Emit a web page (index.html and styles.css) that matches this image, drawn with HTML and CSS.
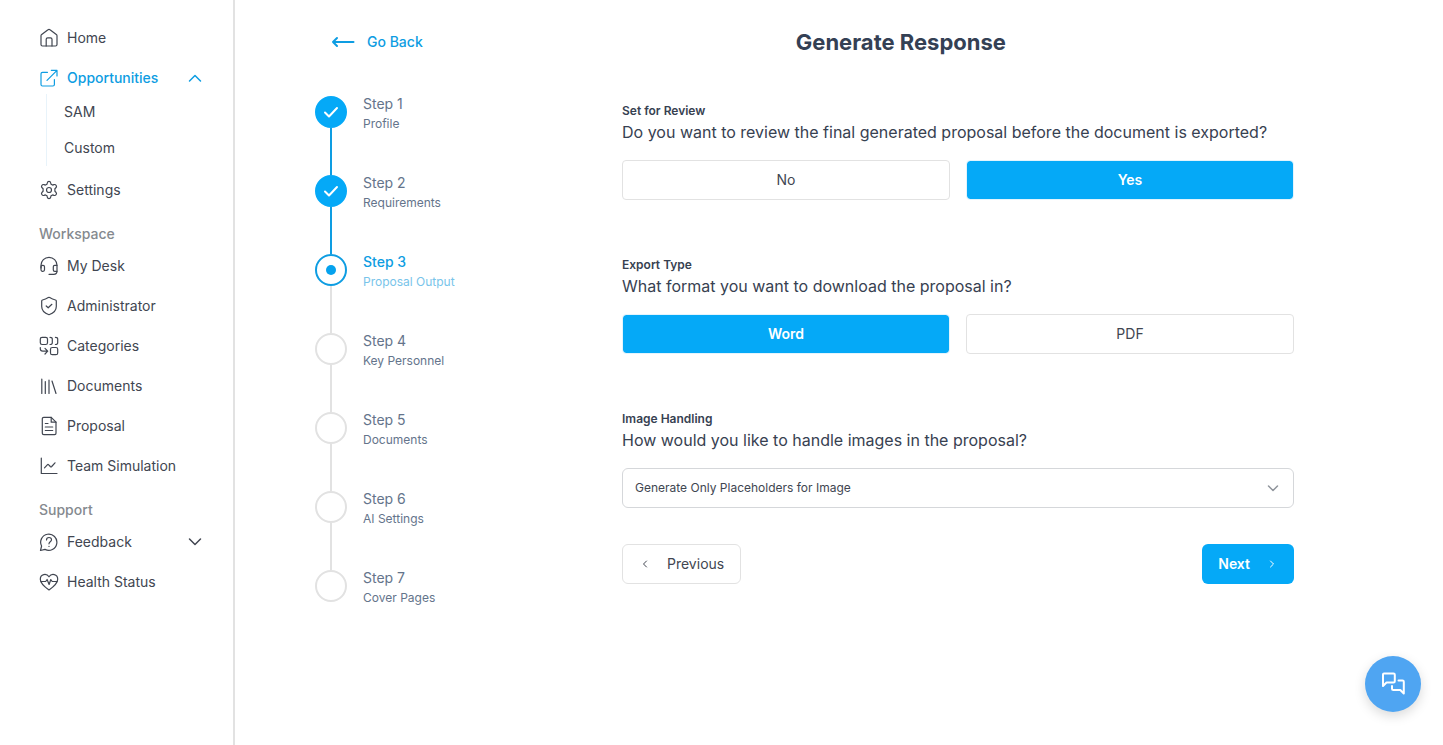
FILE: index.html
```html
<!DOCTYPE html>
<html lang="en">
<head>
    <meta charset="UTF-8">
    <meta name="viewport" content="width=device-width, initial-scale=1.0">
    <title>Generate Response</title>
    <link rel="stylesheet" href="styles.css">
</head>
<body>
    <div class="layout">
        <aside class="sidebar">
            <nav class="nav">
                <a href="#" class="nav-item">
                    <svg class="icon" viewBox="0 0 20 20"><path d="M2 7.8c0-.6.2-1 .7-1.4L9 1.7c.6-.5 1.4-.5 2 0l6.3 4.7c.5.4.7.8.7 1.4v8.7c0 .9-.6 1.500-1.500 1.500h-13C2.600 18 2 17.400 2 16.500z"/><path d="M7.200 18v-6.700c0-.9.6-1.500 1.500-1.500h2.800c.9 0 1.500.6 1.500 1.500V18"/></svg>
                    Home
                </a>
                <div class="nav-group">
                    <button type="button" class="nav-item active">
                        <svg class="icon" viewBox="0 0 20 20"><path d="M8.500 4.300h-5c-.9 0-1.500.6-1.500 1.500v10.700c0 .9.6 1.500 1.500 1.500h10.400c.9 0 1.500-.6 1.500-1.500v-5"/><path d="M8 12.300 18 2.300M12.300 2.300H18V8"/></svg>
                        Opportunities
                        <svg class="chevron" viewBox="0 0 16 16"><path d="m2.500 11 5.500-5.500 5.500 5.500"/></svg>
                    </button>
                    <div class="submenu">
                        <a href="#">SAM</a>
                        <a href="#">Custom</a>
                    </div>
                </div>
                <a href="#" class="nav-item">
                    <svg class="icon" viewBox="0 0 20 20"><circle cx="10" cy="10" r="2.500"/><path d="M8.300 2.900Q8.600 1.400 10 1.400T11.700 2.900L12 4.200 13.600 5.100 14.900 4.600Q16.400 4.200 17.200 5.500T16.900 7.800L15.900 8.700V11.300L16.900 12.200Q18 13.200 17.200 14.500T14.900 15.400L13.600 14.900 12 15.800 11.700 17.100Q11.400 18.600 10 18.600T8.300 17.100L8 15.800 6.400 14.900 5.100 15.400Q3.600 15.800 2.800 14.500T3.100 12.200L4.100 11.300V8.700L3.100 7.800Q2 6.800 2.800 5.500T5.100 4.600L6.400 5.100 8 4.200z"/></svg>
                    Settings
                </a>
            </nav>

            <h2 class="nav-title">Workspace</h2>
            <nav class="nav">
                <a href="#" class="nav-item">
                    <svg class="icon" viewBox="0 0 20 20"><path d="M2 12V9.300a8 8 0 0 1 16 0V15c0 2-1.300 3.300-3.300 3.300H10"/><rect x="2" y="9.300" width="3.500" height="6" rx="1.500"/><path d="M18 9.300h-2.300c-.8 0-1.400.6-1.400 1.400v3.200c0 .8.6 1.400 1.400 1.400H18"/></svg>
                    My Desk
                </a>
                <a href="#" class="nav-item">
                    <svg class="icon" viewBox="0 0 20 20"><path d="M9.300 1.600c.5-.3.9-.3 1.400 0C12.500 2.800 14.300 3.600 16.500 4c.5.1.8.4.8 1v5.500c0 4-2.700 6.700-7.300 8.200-4.600-1.500-7.300-4.200-7.300-8.200V5c0-.6.3-.9.8-1 2.200-.4 4-1.200 5.800-2.400z"/><path d="m7.200 10 2 1.800 3.700-3.500"/></svg>
                    Administrator
                </a>
                <a href="#" class="nav-item">
                    <svg class="icon" viewBox="0 0 20 20"><rect x="1.300" y="1.300" width="7.200" height="7.200" rx="1.800"/><rect x="11.500" y="11.500" width="7.200" height="7.200" rx="1.800"/><path d="M11 1.300c1.700 0 2.300.5 2.300 1.800v3.600c0 1.300-.6 1.800-2.300 1.800M16.400 1.300c1.700 0 2.300.5 2.300 1.800v3.600c0 1.300-.6 1.800-2.300 1.800"/><path d="M1.300 11.500v1.300c0 1.600.8 2.400 2.400 2.400h5M6 12.400l2.700 2.800L6 18"/></svg>
                    Categories
                </a>
                <a href="#" class="nav-item">
                    <svg class="icon" viewBox="0 0 20 20"><path d="M2.800 3v14.500M6.300 5.500v12M10 4v13.500M13 5l4 12.500"/></svg>
                    Documents
                </a>
                <a href="#" class="nav-item">
                    <svg class="icon" viewBox="0 0 20 20"><path d="M4.800 1.400h7.400L17 6.200v11c0 .9-.6 1.400-1.400 1.400H4.800c-.9 0-1.500-.5-1.500-1.400V2.800c0-.9.6-1.400 1.500-1.400z"/><path d="M12.200 1.400v4.800H17M6.300 7.500H9M6.300 11h7.400M6.300 14.500h7.400"/></svg>
                    Proposal
                </a>
                <a href="#" class="nav-item">
                    <svg class="icon" viewBox="0 0 20 20"><path d="M2.300 2v15.500H18"/><path d="m5.500 11.800 2.800-3c.5-.5.9-.5 1.400 0l1.600 1.700c.5.5.9.5 1.400 0L16 6.800"/></svg>
                    Team Simulation
                </a>
            </nav>

            <h2 class="nav-title">Support</h2>
            <nav class="nav">
                <button type="button" class="nav-item">
                    <svg class="icon" viewBox="0 0 20 20"><path d="M1.500 18.500 2.600 14A8.100 8.100 0 1 1 6 17.400z"/><path d="M7.500 8c0-3.300 5-3.300 5-.2 0 2-2.500 2-2.500 4M10 14.300v.2"/></svg>
                    Feedback
                    <svg class="chevron" viewBox="0 0 16 16"><path d="m2.500 5 5.500 5.500L13.500 5"/></svg>
                </button>
                <a href="#" class="nav-item">
                    <svg class="icon" viewBox="0 0 20 20"><path d="M10 18C6.500 15.500 1.300 11.500 1.300 7.200 1.300 2 7.500.8 10 4.800c2.500-4 8.700-2.800 8.700 2.400 0 4.300-5.200 8.300-8.700 10.800z"/><path d="M2 9.500h4.700l1.400-2 2 5 1.700-5 1.400 2H18"/></svg>
                    Health Status
                </a>
            </nav>
        </aside>

        <main class="main">
            <header class="header">
                <a href="#" class="back">
                    <svg class="back-icon" viewBox="0 0 24 20"><path d="M22.500 10H2M6 6l-4 4 4 4"/></svg>
                    Go Back
                </a>
                <h1>Generate Response</h1>
            </header>

            <div class="content">
                <ol class="steps">
                    <li class="step done">
                        <span class="dot"><svg viewBox="0 0 16 16"><path d="m2 8.500 4 4 8-8.500"/></svg></span>
                        <div class="step-text"><strong>Step 1</strong><span>Profile</span></div>
                    </li>
                    <li class="step done">
                        <span class="dot"><svg viewBox="0 0 16 16"><path d="m2 8.500 4 4 8-8.500"/></svg></span>
                        <div class="step-text"><strong>Step 2</strong><span>Requirements</span></div>
                    </li>
                    <li class="step current">
                        <span class="dot"></span>
                        <div class="step-text"><strong>Step 3</strong><span>Proposal Output</span></div>
                    </li>
                    <li class="step">
                        <span class="dot"></span>
                        <div class="step-text"><strong>Step 4</strong><span>Key Personnel</span></div>
                    </li>
                    <li class="step">
                        <span class="dot"></span>
                        <div class="step-text"><strong>Step 5</strong><span>Documents</span></div>
                    </li>
                    <li class="step">
                        <span class="dot"></span>
                        <div class="step-text"><strong>Step 6</strong><span>AI Settings</span></div>
                    </li>
                    <li class="step">
                        <span class="dot"></span>
                        <div class="step-text"><strong>Step 7</strong><span>Cover Pages</span></div>
                    </li>
                </ol>

                <form class="form">
                    <section class="field">
                        <h3>Set for Review</h3>
                        <p>Do you want to review the final generated proposal before the document is exported?</p>
                        <div class="choices">
                            <button type="button" class="choice">No</button>
                            <button type="button" class="choice selected">Yes</button>
                        </div>
                    </section>
                    <section class="field">
                        <h3>Export Type</h3>
                        <p>What format you want to download the proposal in?</p>
                        <div class="choices">
                            <button type="button" class="choice selected">Word</button>
                            <button type="button" class="choice">PDF</button>
                        </div>
                    </section>
                    <section class="field">
                        <h3>Image Handling</h3>
                        <p><label for="images">How would you like to handle images in the proposal?</label></p>
                        <div class="select">
                            <select id="images" name="images">
                                <option>Generate Only Placeholders for Image</option>
                            </select>
                            <svg viewBox="0 0 16 16"><path d="m3.500 6 4.500 4.500L12.500 6"/></svg>
                        </div>
                    </section>
                    <div class="actions">
                        <button type="button" class="btn">
                            <svg viewBox="0 0 12 12"><path d="M7.500 3 4.500 6l3 3"/></svg>
                            Previous
                        </button>
                        <button type="button" class="btn btn-primary">
                            Next
                            <svg viewBox="0 0 12 12"><path d="m4.500 3 3 3-3 3"/></svg>
                        </button>
                    </div>
                </form>
            </div>
        </main>
    </div>

    <button type="button" class="chat" aria-label="Chat">
        <svg viewBox="0 0 24 24"><path d="M3 1.500h9.500c.8 0 1.300.5 1.300 1.300v6.400c0 .8-.5 1.300-1.300 1.300H5.500L2 14V2.500c0-.6.4-1 1-1z"/><path d="M17.500 8.500h4c.8 0 1.300.5 1.300 1.300V21.500L19.300 18h-7c-.8 0-1.300-.5-1.300-1.300V14"/></svg>
    </button>
</body>
</html>
```
FILE: styles.css
```css
* {
    box-sizing: border-box;
}
body {
    margin: 0;
    font-family: Inter, sans-serif;
    font-size: 14px;
    color: #414651;
    background-color: #fff;
}
h1, h2, h3, p, ol {
    margin: 0;
    padding: 0;
}
a {
    color: inherit;
    text-decoration: none;
}
button, select {
    font-family: inherit;
    font-size: 14px;
    line-height: 16px;
    color: inherit;
    cursor: pointer;
}
svg {
    flex-shrink: 0;
    fill: none;
    stroke: currentColor;
    stroke-linecap: round;
    stroke-linejoin: round;
}
.layout {
    display: flex;
    min-height: 100vh;
}

/* sidebar */
.sidebar {
    width: 235px;
    flex-shrink: 0;
    padding: 22px 30px 22px 39px;
    border-right: 2px solid #e2e2e2;
}
.nav {
    display: flex;
    flex-direction: column;
    gap: 8px;
}
.nav-item {
    display: flex;
    align-items: center;
    gap: 8px;
    width: 100%;
    height: 32px;
    padding: 0;
    border: none;
    background: none;
    line-height: 16px;
}
.nav-item.active {
    color: #0e9de2;
    font-weight: 500;
}
.icon {
    width: 20px;
    height: 20px;
    stroke-width: 1.2;
}
.chevron {
    width: 16px;
    height: 16px;
    margin-left: auto;
    stroke-width: 1.5;
}
.submenu {
    margin-left: 7px;
    padding-left: 17px;
    border-left: 1px solid #e8f3fa;
}
.submenu a {
    display: block;
    line-height: 36px;
}
.nav-title {
    margin-top: 12px;
    font-size: 14px;
    font-weight: 500;
    line-height: 32px;
    color: #858a8f;
}

/* page */
.main {
    flex: 1;
    padding: 24px 80px;
}
.header {
    display: flex;
    align-items: center;
    height: 36px;
    margin-bottom: 36px;
}
.back {
    display: flex;
    align-items: center;
    gap: 12px;
    padding: 0 16px;
    font-weight: 500;
    line-height: 16px;
    color: #0e9de2;
}
.back-icon {
    width: 24px;
    height: 20px;
    stroke-width: 2;
}
.header h1 {
    flex: 1;
    font-size: 22px;
    font-weight: 700;
    color: #344054;
    text-align: center;
}
.content {
    display: grid;
    grid-template-columns: 238px 1fr;
}

/* steps */
.steps {
    list-style: none;
}
.step {
    display: grid;
    grid-template-columns: 32px 1fr;
    grid-template-rows: 32px 47px;
    column-gap: 16px;
    color: #64748b;
}
.step::after {
    content: "";
    justify-self: center;
    width: 2px;
    background-color: #e2e2e2;
}
.step:last-child::after {
    display: none;
}
.step.done::after {
    background-color: #0e9de2;
}
.dot {
    display: flex;
    align-items: center;
    justify-content: center;
    height: 32px;
    border: 2px solid #e2e2e2;
    border-radius: 50%;
}
.dot svg {
    width: 16px;
    height: 16px;
    stroke-width: 2;
}
.done .dot {
    border-color: #05a9f7;
    background-color: #05a9f7;
    color: #fff;
}
.current .dot {
    border-color: #0e9de2;
}
.current .dot::before {
    content: "";
    width: 10px;
    height: 10px;
    border-radius: 50%;
    background-color: #05a2ee;
}
.step-text {
    display: flex;
    flex-direction: column;
    gap: 4px;
    line-height: 16px;
}
.step-text strong {
    font-weight: 400;
}
.step-text span {
    font-size: 12px;
}
.current .step-text strong {
    color: #0e9de2;
    font-weight: 500;
}
.current .step-text span {
    color: #78c4ea;
}

/* form */
.form {
    width: 100%;
    max-width: 672px;
    margin: 6px auto 0;
}
.field {
    margin-bottom: 56px;
}
.field h3 {
    font-size: 12px;
    font-weight: 600;
    line-height: 18px;
    color: #374151;
}
.field p {
    margin-bottom: 16px;
    font-size: 16px;
    line-height: 24px;
    color: #374151;
}
.choices {
    display: grid;
    grid-template-columns: 1fr 1fr;
    gap: 16px;
}
.choice {
    height: 40px;
    border: 1px solid #e2e2e2;
    border-radius: 4px;
    background-color: #fff;
}
.choice.selected {
    border-color: #e3f4fd;
    background-color: #05a9f7;
    background-clip: padding-box;
    color: #fff;
    font-weight: 600;
}
.select {
    display: grid;
    align-items: center;
}
.select select,
.select svg {
    grid-area: 1 / 1;
}
.select select {
    width: 100%;
    height: 40px;
    padding: 0 40px 0 12px;
    border: 1px solid #d5d7da;
    border-radius: 6px;
    background-color: #fff;
    font-size: 12px;
    appearance: none;
}
.select svg {
    justify-self: end;
    width: 16px;
    height: 16px;
    margin-right: 13px;
    color: #8f949b;
    stroke-width: 1.5;
    pointer-events: none;
}
.actions {
    display: flex;
    justify-content: space-between;
    margin-top: -20px;
}
.btn {
    display: flex;
    align-items: center;
    gap: 16px;
    height: 40px;
    padding: 0 16px;
    border: 1px solid #e2e2e2;
    border-radius: 6px;
    background-color: #fff;
}
.btn svg {
    width: 12px;
    height: 12px;
}
.btn-primary {
    border: none;
    background-color: #05a9f7;
    color: #fff;
    font-weight: 600;
}

.chat {
    position: fixed;
    right: 22px;
    bottom: 33px;
    display: flex;
    align-items: center;
    justify-content: center;
    width: 56px;
    height: 56px;
    padding: 0;
    border: none;
    border-radius: 50%;
    background-color: #4fa5f2;
    box-shadow: 0 4px 12px rgba(0,0,0,0.15);
    color: #fff;
}
.chat svg {
    width: 24px;
    height: 24px;
    stroke-width: 2;
}
```
